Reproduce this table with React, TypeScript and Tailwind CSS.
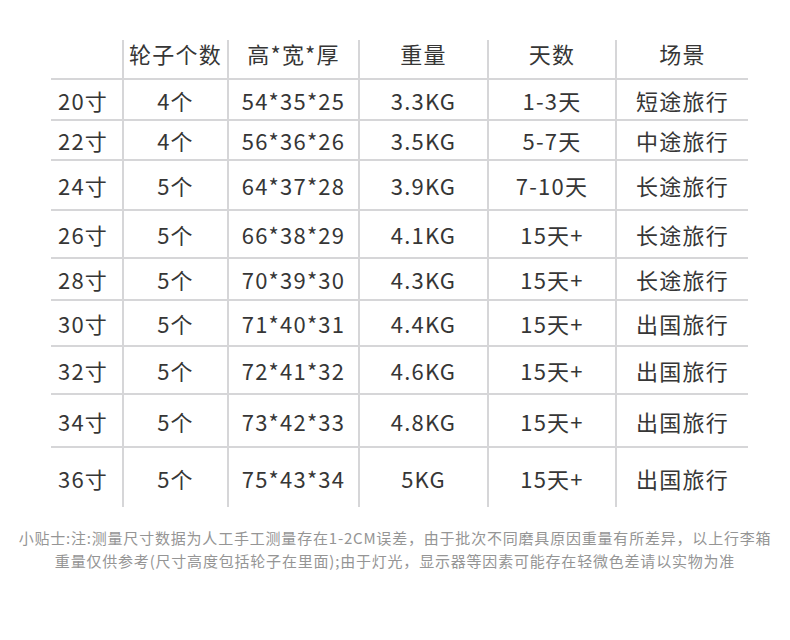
import React from "react";

const cols = ["w-[71px]", "w-[105px]", "w-[131px]", "w-[129px]", "w-[128px]", "w-[133px]"];

const header = ["", "轮子个数", "高*宽*厚", "重量", "天数", "场景"];

const rows: { h: string; cells: string[] }[] = [
  { h: "h-[41px]", cells: ["20寸", "4个", "54*35*25", "3.3KG", "1-3天", "短途旅行"] },
  { h: "h-[40px]", cells: ["22寸", "4个", "56*36*26", "3.5KG", "5-7天", "中途旅行"] },
  { h: "h-[50px]", cells: ["24寸", "5个", "64*37*28", "3.9KG", "7-10天", "长途旅行"] },
  { h: "h-[48px]", cells: ["26寸", "5个", "66*38*29", "4.1KG", "15天+", "长途旅行"] },
  { h: "h-[42px]", cells: ["28寸", "5个", "70*39*30", "4.3KG", "15天+", "长途旅行"] },
  { h: "h-[46px]", cells: ["30寸", "5个", "71*40*31", "4.4KG", "15天+", "出国旅行"] },
  { h: "h-[48px]", cells: ["32寸", "5个", "72*41*32", "4.6KG", "15天+", "出国旅行"] },
  { h: "h-[53px]", cells: ["34寸", "5个", "73*42*33", "4.8KG", "15天+", "出国旅行"] },
  { h: "h-[61px]", cells: ["36寸", "5个", "75*43*34", "5KG", "15天+", "出国旅行"] },
];

export default function App() {
  return (
    <div
      className="w-[790px] h-[640px] bg-white overflow-hidden"
      style={{ fontFamily: '"Noto Sans CJK SC", "Noto Sans", sans-serif' }}
    >
      <div className="pt-[40px] pl-[51px]">
        <div className="flex flex-col w-[697px] text-[#363636] text-[22px] tracking-[1.2px] leading-none">
          <div className="flex h-[38px]">
            {header.map((t, i) => (
              <div
                key={i}
                className={`${cols[i]} ${i > 0 ? "border-l-2" : ""} border-[#d6d6d8] flex items-center justify-center pb-[12px]`}
              >
                {t}
              </div>
            ))}
          </div>
          {rows.map((r, ri) => (
            <div key={ri} className={`flex ${r.h}`}>
              {r.cells.map((t, i) => (
                <div
                  key={i}
                  className={`${cols[i]} border-t-2 ${i > 0 ? "border-l-2" : ""} border-[#d6d6d8] flex items-center ${
                    i === 0 ? "justify-start pl-[7px]" : "justify-center"
                  }`}
                >
                  {t}
                </div>
              ))}
            </div>
          ))}
        </div>
      </div>
      <div className="mt-[19px] flex flex-col items-center text-[15px] leading-[23px] tracking-[0.8px] text-[#959595]">
        <div>小贴士:注:测量尺寸数据为人工手工测量存在1-2CM误差，由于批次不同磨具原因重量有所差异，以上行李箱</div>
        <div>重量仅供参考(尺寸高度包括轮子在里面);由于灯光，显示器等因素可能存在轻微色差请以实物为准</div>
      </div>
    </div>
  );
}
